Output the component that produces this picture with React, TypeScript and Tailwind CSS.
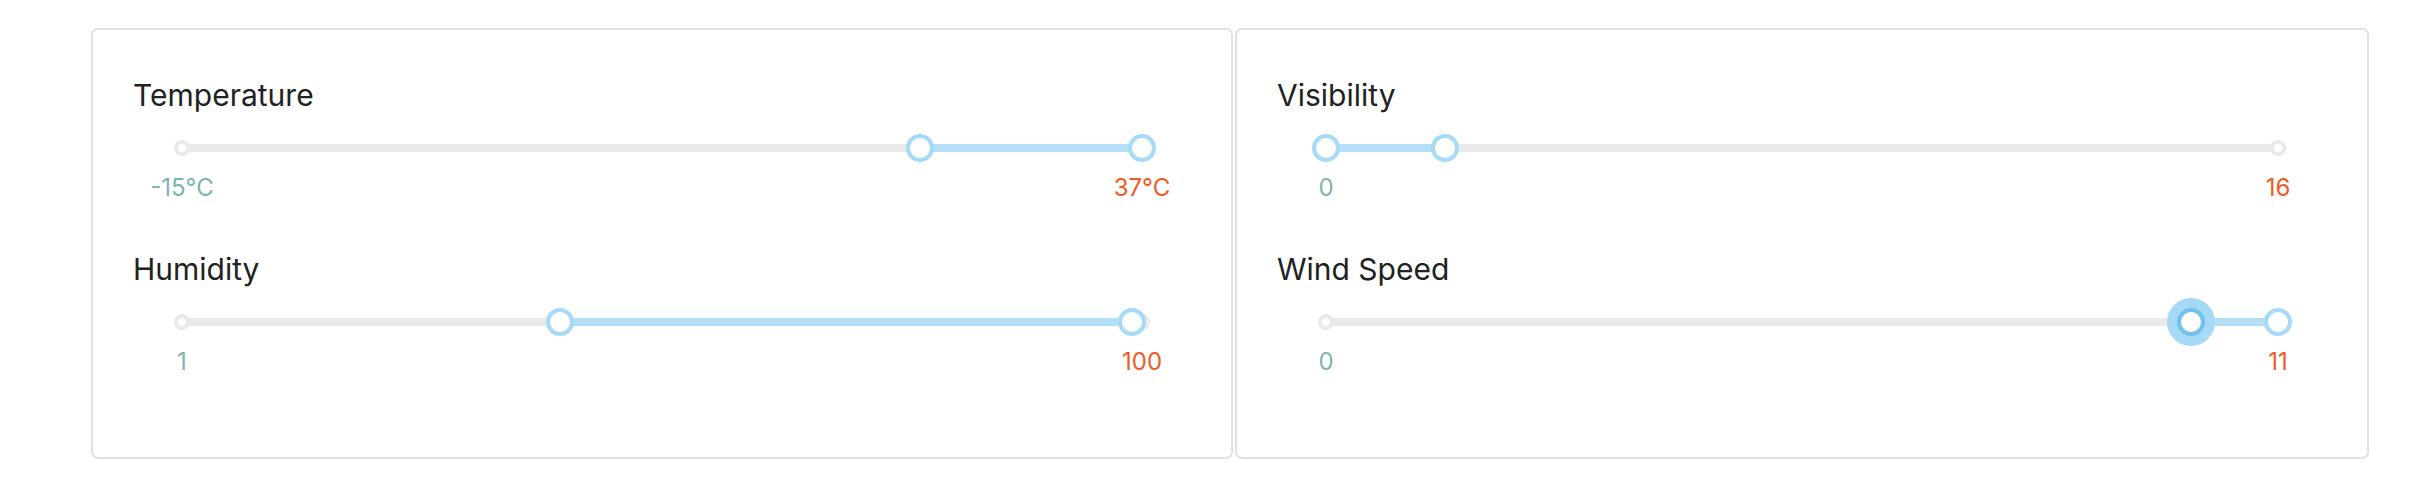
import React from 'react';

type RangeProps = {
  label: string;
  min: number;
  max: number;
  value: [number, number];
  unit?: string;
  focused?: 0 | 1;
};

// position of a value along the rail, in percent
const pct = (v: number, min: number, max: number) => ((v - min) / (max - min)) * 100;

const RangeSlider = ({ label, min, max, value, unit = '', focused }: RangeProps) => {
  const lo = pct(value[0], min, max);
  const hi = pct(value[1], min, max);
  const dotActive = (v: number) => v >= value[0] && v <= value[1];

  return (
    <div>
      <div className="text-[30px] leading-[36px] text-[#222222]">{label}</div>
      <div className="mt-[21px] mx-[49px]">
        <div className="relative h-[28px]">
          {/* rail */}
          <div className="absolute left-0 right-0 top-[10px] h-[8px] rounded-full bg-[#e9e9e9]" />
          {/* track */}
          <div
            className="absolute top-[10px] h-[8px] bg-[#b3e0f7]"
            style={{ left: `${lo}%`, width: `${hi - lo}%` }}
          />
          {/* end dots */}
          {[min, max].map((v) => (
            <div
              key={v}
              className={`absolute top-[6px] w-[16px] h-[16px] -ml-[8px] rounded-full border-[4px] bg-white ${
                dotActive(v) ? 'border-[#a5daf7]' : 'border-[#e9e9e9]'
              }`}
              style={{ left: `${pct(v, min, max)}%` }}
            />
          ))}
          {/* handles */}
          {[lo, hi].map((p, i) => (
            <div
              key={i}
              className={`absolute top-0 w-[28px] h-[28px] -ml-[14px] rounded-full bg-white border-[4px] ${
                focused === i
                  ? 'border-[#72c2ee] shadow-[0_0_0_10px_#a6d9f6] z-10'
                  : 'border-[#a6daf7]'
              }`}
              style={{ left: `${p}%` }}
            />
          ))}
        </div>
        <div className="relative h-[28px] mt-[12px] text-[24px] leading-[28px]">
          <span className="absolute left-0 -translate-x-1/2 whitespace-nowrap text-[#80b3b4]">
            {min}
            {unit}
          </span>
          <span className="absolute left-full -translate-x-1/2 whitespace-nowrap text-[#f15a24]">
            {max}
            {unit}
          </span>
        </div>
      </div>
    </div>
  );
};

const Card = ({ width, children }: { width: string; children: React.ReactNode }) => (
  <div className={`${width} h-[431px] rounded-[7px] border-2 border-[#e1e1e1] bg-white pl-[40px] pr-[40px] pt-[47px]`}>
    <div className="flex flex-col gap-[49px]">{children}</div>
  </div>
);

export default function App() {
  return (
    <div
      className="w-[2416px] h-[500px] bg-white pl-[91px] pt-[28px] flex gap-[2px]"
      style={{ fontFamily: 'Inter, "Noto Sans", sans-serif' }}
    >
      <Card width="w-[1142px]">
        <RangeSlider label="Temperature" min={-15} max={37} value={[25, 37]} unit="°C" />
        <RangeSlider label="Humidity" min={1} max={100} value={[40, 99]} />
      </Card>
      <Card width="w-[1134px]">
        <RangeSlider label="Visibility" min={0} max={16} value={[0, 2]} />
        <RangeSlider label="Wind Speed" min={0} max={11} value={[10, 11]} focused={0} />
      </Card>
    </div>
  );
}
